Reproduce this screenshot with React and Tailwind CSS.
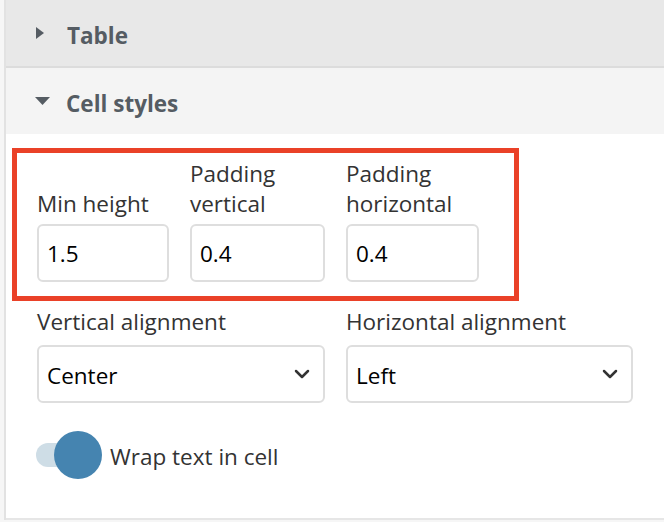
import React from 'react';
import {ChevronDown} from 'lucide-react';

const Field = ({label, value, w}) => {
    return (
        <div className="flex flex-col" style={{width: w}}>
            <label className="text-[22.5px] leading-[30px] text-[#333] mb-[5px]">{label}</label>
            <div className="h-[58px] border-2 border-[#dedede] rounded-[6px] px-[8px] pt-[2px] flex items-center text-[22.5px] text-black">
                {value}
            </div>
        </div>
    );
}

const Select = ({label, value, w}) => {
    return (
        <div className="flex flex-col" style={{width: w}}>
            <label className="text-[22.5px] leading-[30px] text-[#333] mb-[8px]">{label}</label>
            <div className="h-[58px] border-2 border-[#dedede] rounded-[6px] pl-[8px] pr-[9px] flex items-center justify-between text-[22.5px] text-black">
                <span className="pt-[3px]">{value}</span>
                <ChevronDown size={24} strokeWidth={2.5} className="text-[#333]" />
            </div>
        </div>
    );
}

const App = () => {
    return (
        <div className="w-[664px] h-[522px] bg-[#f6f6f6] pl-[4px] overflow-hidden" style={{fontFamily: '"Open Sans", Lato, sans-serif'}}>
            <div className="h-[520px] border-l-2 border-[#e2e2e2] flex flex-col">
                <div className="h-[68px] bg-[#e8e8e8] border-b-2 border-[#dcdcdc] flex items-center pl-[30px] gap-[23px]">
                    <svg width="8" height="12" viewBox="0 0 8 12"><path d="M0 0 L8 6 L0 12 Z" fill="#555c63" /></svg>
                    <span className="text-[22.5px] font-bold text-[#555c63] pt-[6px]">Table</span>
                </div>
                <div className="h-[66px] bg-[#f4f4f4] flex items-center pl-[29px] gap-[16px]">
                    <svg width="15" height="8" viewBox="0 0 15 8"><path d="M0 0 L15 0 L7.5 8 Z" fill="#555c63" /></svg>
                    <span className="text-[22.5px] font-bold text-[#555c63] pt-[6px]">Cell styles</span>
                </div>
                <div className="flex-1 bg-white border-b-2 border-[#e6e6e6] pt-[14px] pl-[6px]">
                    <div className="w-[507px] border-[5px] border-[#ea4128] pt-[6px] pb-[14px] pl-[20px] flex items-end gap-[21px]">
                        <Field label="Min height" value="1.5" w={132} />
                        <Field label={<>Padding<br />vertical</>} value="0.4" w={135} />
                        <Field label={<>Padding<br />horizontal</>} value="0.4" w={133} />
                    </div>
                    <div className="pl-[25px] pt-[6px] flex gap-[21px]">
                        <Select label="Vertical alignment" value="Center" w={288} />
                        <Select label="Horizontal alignment" value="Left" w={287} />
                    </div>
                    <div className="pl-[24px] mt-[28px] flex items-center gap-[8px]">
                        <div className="relative w-[66px] h-[48px] flex items-center">
                            <div className="w-[49px] h-[24px] rounded-full bg-[#cedde6]" />
                            <div className="absolute right-0 top-0 w-[48px] h-[48px] rounded-full bg-[#4584b0]" />
                        </div>
                        <span className="text-[22.5px] text-[#333] pt-[3px]">Wrap text in cell</span>
                    </div>
                </div>
            </div>
        </div>
    );
}

export default App;
